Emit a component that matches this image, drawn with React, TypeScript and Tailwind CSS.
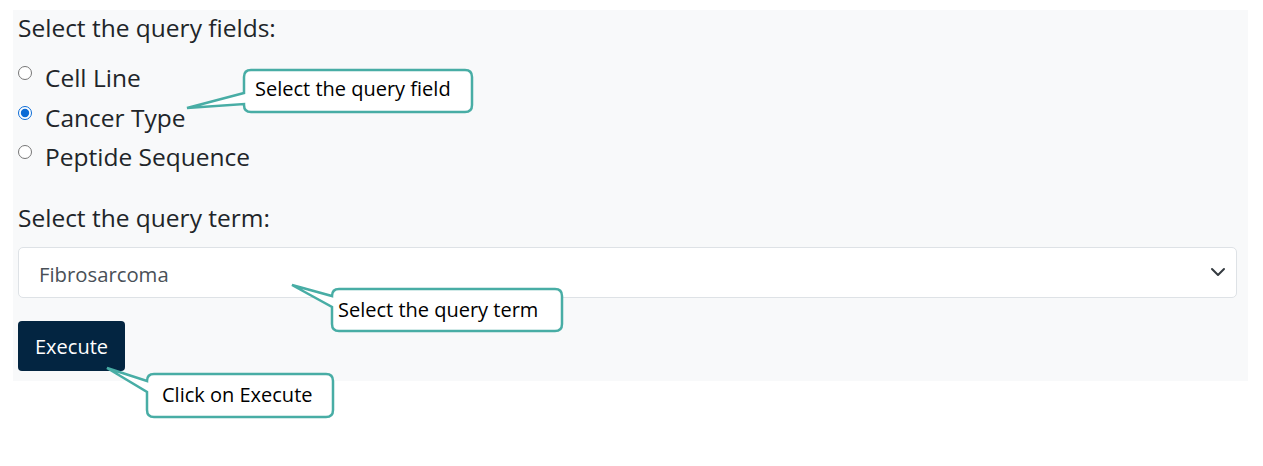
import { useState } from "react";

const fields = ["Cell Line", "Cancer Type", "Peptide Sequence"];

function Callouts() {
  return (
    <>
      <svg
        className="absolute left-0 top-0 pointer-events-none"
        width="1263"
        height="466"
        viewBox="0 0 1263 466"
      >
        <g fill="#ffffff" stroke="#48ada5" strokeWidth="2.5">
          <path d="M251 70 H465 Q472 70 472 77 V105 Q472 112 465 112 H251 Q244 112 244 105 V104 L187 108 L244 93 V77 Q244 70 251 70 Z" />
          <path d="M339 289 H555 Q562 289 562 296 V324 Q562 331 555 331 H339 Q332 331 332 324 V307 L292 285 L332 296 Q332 289 339 289 Z" />
          <path d="M154 374 H326 Q333 374 333 381 V410 Q333 417 326 417 H154 Q147 417 147 410 V392 L107 368 L147 381 Q147 374 154 374 Z" />
        </g>
      </svg>
      <div className="absolute left-[255px] top-[76px] text-[20px] leading-[26px] text-black font-['Open_Sans',sans-serif]">
        Select the query field
      </div>
      <div className="absolute left-[338px] top-[297px] text-[20px] leading-[26px] text-black font-['Open_Sans',sans-serif]">
        Select the query term
      </div>
      <div className="absolute left-[162px] top-[382px] text-[20px] leading-[26px] text-black font-['Open_Sans',sans-serif]">
        Click on Execute
      </div>
    </>
  );
}

export default function App() {
  const [field, setField] = useState("Cancer Type");

  return (
    <div className="relative h-[466px] w-full bg-white pl-[13px] pt-[10px] font-['Open_Sans',sans-serif] text-[#212529]">
      <div className="w-[1235px] bg-[#f8f9fa] pl-[5px] pr-[11px] pb-[10px]">
        <div className="text-[24.5px] leading-[36px]">Select the query fields:</div>

        <div className="mt-[12px] flex flex-col">
          {fields.map((f) => (
            <label key={f} className="flex h-[39.5px] items-start text-[24.5px] leading-[40px]">
              <input
                type="radio"
                name="field"
                checked={field === f}
                onChange={() => setField(f)}
                className="m-0 mt-[8px] h-[14px] w-[14px] accent-[#0b6bd6]"
              />
              <span className="ml-[13px]">{f}</span>
            </label>
          ))}
        </div>

        <div className="mt-[23px] text-[24.5px] leading-[36px]">Select the query term:</div>

        <div className="mt-[11px] flex h-[51px] items-center justify-between rounded-[5px] border border-[#dee2e6] bg-white pl-[20px] pr-[10px]">
          <span className="pt-[5px] text-[20.3px] text-[#495057]">Fibrosarcoma</span>
          <svg width="16" height="16" viewBox="0 0 16 16" fill="none">
            <path d="m2 5 6 6 6-6" stroke="#343a40" strokeWidth="2" strokeLinecap="round" strokeLinejoin="round" />
          </svg>
        </div>

        <button className="mt-[23px] flex h-[50px] w-[107px] items-center justify-center rounded-[4px] bg-[#032541] pt-[2px] text-[20px] text-white">
          Execute
        </button>
      </div>

      <Callouts />
    </div>
  );
}
